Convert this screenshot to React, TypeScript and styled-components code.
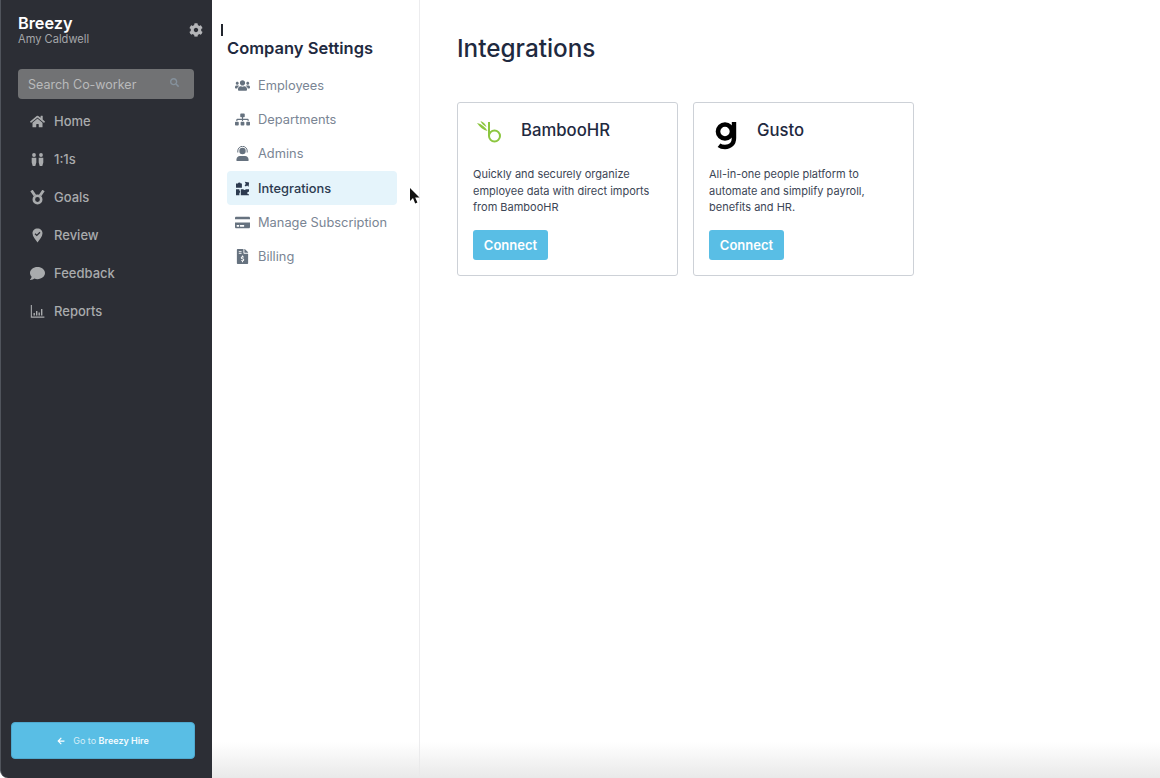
import React from "react";
import styled, { createGlobalStyle } from "styled-components";
import {
  FaCog,
  FaSearch,
  FaHome,
  FaComment,
  FaUsers,
  FaSitemap,
  FaCreditCard,
  FaFileInvoiceDollar,
  FaArrowLeft,
} from "react-icons/fa";

const GlobalStyle = createGlobalStyle`
  html, body {
    margin: 0;
    padding: 0;
    height: 100%;
    background: #fff;
    font-family: Inter, "Liberation Sans", sans-serif;
  }
  #root {
    height: 100%;
  }
`;

const Page = styled.div`
  display: flex;
  width: 1160px;
  height: 778px;
  overflow: hidden;
  position: relative;
`;

const Sidebar = styled.aside`
  width: 212px;
  flex-shrink: 0;
  background: #2c2e35;
  border-left: 1px solid #50545c;
  border-bottom-left-radius: 8px;
  box-sizing: border-box;
  display: flex;
  flex-direction: column;
  padding: 14px 17px 19px 10px;
`;

const Brand = styled.div`
  display: flex;
  justify-content: space-between;
  align-items: center;
  padding-left: 7px;
  height: 32px;
`;

const BrandName = styled.div`
  font-size: 16.3px;
  font-weight: 600;
  line-height: 18px;
  color: #fff;
`;

const BrandUser = styled.div`
  font-size: 11.1px;
  line-height: 14px;
  color: #a5a7aa;
`;

const Gear = styled(FaCog)`
  color: #b4b5b8;
  font-size: 14px;
  margin-right: -8px;
`;

const Search = styled.div`
  margin: 23px 0 0 7px;
  height: 30px;
  width: 176px;
  box-sizing: border-box;
  border-radius: 4px;
  background: #717274;
  display: flex;
  align-items: center;
  justify-content: space-between;
  padding: 0 15px 0 10px;
  font-size: 12.5px;
  color: #b9babb;
`;

const SearchIcon = styled(FaSearch)`
  color: #85919c;
  font-size: 9px;
  margin-bottom: 4px;
`;

const MainNav = styled.nav`
  display: flex;
  flex-direction: column;
  margin-top: 3px;
`;

const MainNavItem = styled.div`
  height: 38px;
  display: flex;
  align-items: center;
  padding-left: 18px;
  gap: 9px;
  font-size: 13px;
  font-weight: 500;
  color: #a9abad;
`;

const MainIconBox = styled.span`
  width: 16px;
  display: flex;
  justify-content: center;
  color: #a9abad;
  font-size: 15px;
`;

const HireButton = styled.button`
  margin-top: auto;
  width: 184px;
  height: 37px;
  border: 1px solid #4ea9cf;
  border-radius: 4px;
  background: #59bee5;
  display: flex;
  align-items: center;
  justify-content: center;
  gap: 8px;
  font-family: inherit;
  font-size: 9px;
  color: #d5eef8;
  padding: 0;
`;

const HireBold = styled.b`
  font-weight: 600;
  color: #f4fbfe;
`;

const BackArrow = styled(FaArrowLeft)`
  font-size: 8px;
  color: #fff;
`;

const SettingsColumn = styled.div`
  width: 208px;
  flex-shrink: 0;
  box-sizing: border-box;
  border-right: 1px solid #ececee;
  padding: 37px 22px 0 15px;
`;

const SettingsTitle = styled.h2`
  margin: 0 0 9.4px;
  font-size: 16.5px;
  font-weight: 600;
  line-height: 22px;
  color: #1f2a3f;
`;

const SettingsNav = styled.nav`
  display: flex;
  flex-direction: column;
`;

const SettingsItem = styled.div<{ $active?: boolean }>`
  height: 34.2px;
  display: flex;
  align-items: center;
  border-radius: 4px;
  padding-left: 7px;
  gap: 8px;
  font-size: 12.85px;
  font-weight: ${(p) => (p.$active ? 500 : 400)};
  color: ${(p) => (p.$active ? "#2c3a4f" : "#7a8594")};
  background: ${(p) => (p.$active ? "#e5f4fb" : "transparent")};
`;

const SettingsIconBox = styled.span<{ $active?: boolean }>`
  width: 16px;
  display: flex;
  justify-content: center;
  font-size: 15px;
  color: ${(p) => (p.$active ? "#2c3a4f" : "#66727f")};
`;

const Content = styled.main`
  flex: 1;
  padding: 33px 37px;
`;

const PageTitle = styled.h1`
  margin: 0 0 39px;
  font-size: 24.3px;
  font-weight: 500;
  line-height: 30px;
  color: #1f2a3f;
`;

const Cards = styled.div`
  display: flex;
  gap: 15px;
`;

const Card = styled.section`
  width: 221px;
  height: 174px;
  box-sizing: border-box;
  border: 1px solid #cdd1d7;
  border-radius: 3px;
  padding: 0 15px;
`;

const CardHead = styled.div`
  height: 54px;
  display: flex;
  align-items: center;
  gap: 14px;
`;

const LogoBox = styled.div`
  width: 34px;
  display: flex;
  justify-content: center;
`;

const CardName = styled.div`
  font-size: 16.7px;
  font-weight: 500;
  color: #1f2a3f;
`;

const CardText = styled.p`
  margin: 9px 0 14px;
  font-size: 11px;
  line-height: 16.7px;
  color: #3c4656;
`;

const ConnectButton = styled.button`
  width: 75px;
  height: 30px;
  border: none;
  border-radius: 3px;
  background: #59bee5;
  color: #fff;
  font-family: inherit;
  font-size: 13px;
  font-weight: 600;
  padding: 0;
`;

const BottomFade = styled.div`
  position: absolute;
  left: 212px;
  right: 0;
  bottom: 0;
  height: 36px;
  background: linear-gradient(to bottom, rgba(235, 235, 235, 0), #e9e9e9);
  pointer-events: none;
`;

const TextCaret = styled.span`
  position: absolute;
  left: 221px;
  top: 24px;
  width: 1.5px;
  height: 12px;
  background: #22262e;
`;

const Cursor = styled.svg`
  position: absolute;
  left: 409px;
  top: 188px;
`;

const TwoPeople = () => (
  <svg width="15" height="15" viewBox="0 0 15 15" fill="currentColor">
    <circle cx="4" cy="3" r="1.9" />
    <circle cx="11" cy="3" r="1.9" />
    <path d="M1.700 5.800h4.600v4.700L5.300 14H2.700l-1-3.500zM8.700 5.800h4.600v4.700L12.300 14H9.700l-1-3.500z" />
  </svg>
);

const Medal = () => (
  <svg width="15" height="15" viewBox="0 0 15 15" fill="none" stroke="currentColor">
    <path d="M1.500 .5l3.400 5M13.500 .5l-3.400 5" strokeWidth="2.800" />
    <circle cx="7.500" cy="9.500" r="3.700" strokeWidth="2.600" />
  </svg>
);

const PinCheck = () => (
  <svg width="15" height="15" viewBox="0 0 15 15">
    <path d="M7.500 .5c3 0 5 2.100 5 4.800 0 3.300-3 6.400-5 9.200-2-2.800-5-5.900-5-9.200C2.500 2.600 4.500 .5 7.500 .5z" fill="currentColor" />
    <path d="M5 5.700l1.800 1.700 3.200-3.100" fill="none" stroke="#2c2e35" strokeWidth="1.300" />
  </svg>
);

const ChartAxis = () => (
  <svg width="15" height="15" viewBox="0 0 15 15" fill="currentColor">
    <path d="M.8 1h1.100v11.600h12.500v1.100H.8z" />
    <path d="M3.500 9h1.400v2.600H3.500zM6 7h1.400v4.600H6zM8.500 8.500h1.400v3.100H8.500zM11 5h1.400v6.600H11z" />
  </svg>
);

const HeadsetPerson = () => (
  <svg width="15" height="15" viewBox="0 0 15 15">
    <circle cx="7.500" cy="5" r="3.200" fill="currentColor" />
    <path d="M2.800 6.500V5a4.700 4.700 0 0 1 9.400 0v1.500" fill="none" stroke="currentColor" strokeWidth="1" />
    <path d="M1.500 15v-1.700c0-1.900 1.500-3.300 3.400-3.300h5.200c1.900 0 3.400 1.400 3.400 3.300V15z" fill="currentColor" />
  </svg>
);

const Puzzle = () => (
  <svg width="15" height="15" viewBox="0 0 15 15" fill="currentColor">
    <path d="M1 2.500h1.800a1.600 1.600 0 0 1 3 0h1.100v4.300H1zM9.800 .8l4.300.6-.5 4.400-1.500-1.400-1.200 1.200-1.300-1.200 1.200-1.300zM1 8.200h3.400v1.300a1.400 1.400 0 0 1 0 2.500v2.200H1zM5.800 8.200h2.500a1.400 1.400 0 0 0 2.500 0H14v2.700c-1-.3-1.700.4-1.700 1.200s.7 1.500 1.700 1.200v.9H5.800z" />
  </svg>
);

const BambooLogo = () => (
  <svg width="28" height="28" viewBox="0 0 28 28" fill="none" stroke="#8cc63f">
    <path d="M13 6v14" strokeWidth="2" />
    <circle cx="18.500" cy="20" r="5.500" strokeWidth="2" />
    <path d="M11.500 15C7.500 14 3.500 11 1 7c4.500 1 8.500 4 10.500 8z" fill="#8cc63f" stroke="none" />
    <path d="M10.500 11C8.500 10 5.500 8 4.500 5c3 1 5 3 6 6z" fill="#8cc63f" stroke="none" />
  </svg>
);

const GustoLogo = () => (
  <svg width="24" height="40" viewBox="0 0 24 40" fill="none" stroke="#000">
    <g transform="translate(0 10)">
      <circle cx="11" cy="11.500" r="7" strokeWidth="4.600" />
      <path d="M20 2v16c0 5.500-3.500 9-9 9-2.500 0-4.500-.6-6-1.800" strokeWidth="4.400" />
    </g>
  </svg>
);

const mainNav: { label: string; icon: React.ReactNode }[] = [
  { label: "Home", icon: <FaHome /> },
  { label: "1:1s", icon: <TwoPeople /> },
  { label: "Goals", icon: <Medal /> },
  { label: "Review", icon: <PinCheck /> },
  { label: "Feedback", icon: <FaComment /> },
  { label: "Reports", icon: <ChartAxis /> },
];

const settingsNav: { label: string; icon: React.ReactNode; active?: boolean }[] = [
  { label: "Employees", icon: <FaUsers /> },
  { label: "Departments", icon: <FaSitemap /> },
  { label: "Admins", icon: <HeadsetPerson /> },
  { label: "Integrations", icon: <Puzzle />, active: true },
  { label: "Manage Subscription", icon: <FaCreditCard /> },
  { label: "Billing", icon: <FaFileInvoiceDollar /> },
];

export default function App() {
  return (
    <Page>
      <GlobalStyle />
      <Sidebar>
        <Brand>
          <div>
            <BrandName>Breezy</BrandName>
            <BrandUser>Amy Caldwell</BrandUser>
          </div>
          <Gear />
        </Brand>
        <Search>
          Search Co-worker
          <SearchIcon />
        </Search>
        <MainNav>
          {mainNav.map((item) => (
            <MainNavItem key={item.label}>
              <MainIconBox>{item.icon}</MainIconBox>
              {item.label}
            </MainNavItem>
          ))}
        </MainNav>
        <HireButton>
          <BackArrow />
          <span>
            Go to <HireBold>Breezy Hire</HireBold>
          </span>
        </HireButton>
      </Sidebar>

      <SettingsColumn>
        <SettingsTitle>Company Settings</SettingsTitle>
        <SettingsNav>
          {settingsNav.map((item) => (
            <SettingsItem key={item.label} $active={item.active}>
              <SettingsIconBox $active={item.active}>{item.icon}</SettingsIconBox>
              {item.label}
            </SettingsItem>
          ))}
        </SettingsNav>
      </SettingsColumn>

      <Content>
        <PageTitle>Integrations</PageTitle>
        <Cards>
          <Card>
            <CardHead>
              <LogoBox>
                <BambooLogo />
              </LogoBox>
              <CardName>BambooHR</CardName>
            </CardHead>
            <CardText>
              Quickly and securely organize employee data with direct imports from BambooHR
            </CardText>
            <ConnectButton>Connect</ConnectButton>
          </Card>
          <Card>
            <CardHead>
              <LogoBox>
                <GustoLogo />
              </LogoBox>
              <CardName>Gusto</CardName>
            </CardHead>
            <CardText>
              All-in-one people platform to automate and simplify payroll, benefits and HR.
            </CardText>
            <ConnectButton>Connect</ConnectButton>
          </Card>
        </Cards>
      </Content>

      <BottomFade />
      <TextCaret />
      <Cursor width="12" height="18" viewBox="0 0 12 18">
        <path d="M1 0v13l3-3 2.200 5.500 2.200-1L6.200 9.500H10.500z" fill="#111" />
      </Cursor>
    </Page>
  );
}
